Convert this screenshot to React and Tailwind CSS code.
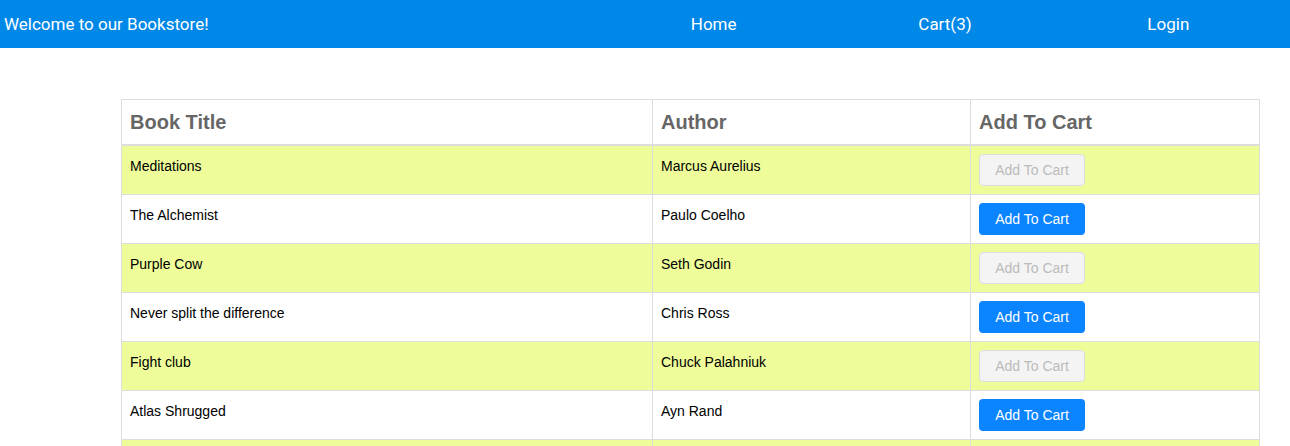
import { useState } from "react";

const livros = [
  { titulo: "Meditations", autor: "Marcus Aurelius", noCarrinho: true },
  { titulo: "The Alchemist", autor: "Paulo Coelho", noCarrinho: false },
  { titulo: "Purple Cow", autor: "Seth Godin", noCarrinho: true },
  { titulo: "Never split the difference", autor: "Chris Ross", noCarrinho: false },
  { titulo: "Fight club", autor: "Chuck Palahniuk", noCarrinho: true },
  { titulo: "Atlas Shrugged", autor: "Ayn Rand", noCarrinho: false },
  { titulo: "Zero to One", autor: "Peter Thiel", noCarrinho: true },
];

export default function App() {
  const [lista, setLista] = useState(livros);

  const adicionar = (i) => {
    setLista(lista.map((l, idx) => (idx === i ? { ...l, noCarrinho: true } : l)));
  };

  const total = lista.filter((l, i) => l.noCarrinho && i < 6).length;

  return (
    <div className="h-screen overflow-hidden bg-white font-['Liberation_Sans',Arial,sans-serif]">
      <header className="flex h-12 items-center bg-[#0088e9] text-white font-['Roboto',sans-serif] text-[17px]">
        <div className="w-[598px] pl-1 pt-px">Welcome to our Bookstore!</div>
        <nav className="flex flex-1 pt-px">
          <a className="flex-1 text-center pl-[4px]">Home</a>
          <a className="flex-1 text-center pl-[8px]">Cart({total})</a>
          <a className="flex-1 text-center pr-[10px]">Login</a>
        </nav>
      </header>

      <div className="pt-[51px] pl-[121px]">
        <table className="w-[1139px] border-collapse border border-[#dddddd] text-left">
          <thead>
            <tr className="border-b-2 border-[#dddddd]">
              <th className="w-[531px] border border-[#dddddd] px-2 py-2 text-xl leading-[28px] font-bold text-[#666666]">
                Book Title
              </th>
              <th className="w-[318px] border border-[#dddddd] px-2 py-2 text-xl leading-[28px] font-bold text-[#666666]">
                Author
              </th>
              <th className="border border-[#dddddd] px-2 py-2 text-xl leading-[28px] font-bold text-[#666666]">
                Add To Cart
              </th>
            </tr>
          </thead>
          <tbody>
            {lista.map((livro, i) => (
              <tr key={livro.titulo} className={i % 2 === 0 ? "bg-[#eefd9a]" : "bg-white"}>
                <td className="h-[49px] border border-[#dddddd] px-2 pt-[10px] align-top text-sm leading-5 text-black">
                  {livro.titulo}
                </td>
                <td className="border border-[#dddddd] px-2 pt-[10px] align-top text-sm leading-5 text-black">
                  {livro.autor}
                </td>
                <td className="border border-[#dddddd] px-2 py-2 align-top">
                  <button
                    onClick={() => adicionar(i)}
                    disabled={livro.noCarrinho}
                    className={
                      livro.noCarrinho
                        ? "flex h-8 w-[106px] items-center justify-center rounded border border-[#dddddd] bg-[#f4f4f4] text-sm text-[#bbbbbb]"
                        : "flex h-8 w-[106px] items-center justify-center rounded bg-[#0a84ff] text-sm text-white"
                    }
                  >
                    Add To Cart
                  </button>
                </td>
              </tr>
            ))}
          </tbody>
        </table>
      </div>
    </div>
  );
}
